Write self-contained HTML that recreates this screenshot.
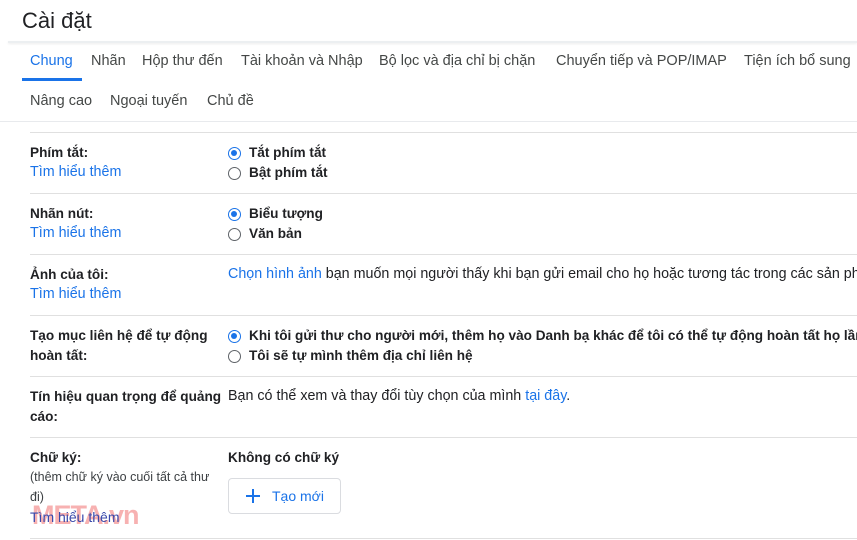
<!DOCTYPE html>
<html><head><meta charset="utf-8"><style>
*{margin:0;padding:0;box-sizing:border-box}
body{width:857px;height:540px;overflow:hidden;background:#fff;font-family:"Liberation Sans",Arial,sans-serif;color:#202124;position:relative;font-size:14.3px}
.a{position:absolute;white-space:nowrap}
.t{font-size:14.5px;color:#444746}
.b{font-weight:bold;color:#202124;font-size:13.6px}
.l{color:#1a73e8}
.hr{position:absolute;left:30px;right:0;height:1px;background:#e0e0e0}
.r{position:absolute;width:13px;height:13px;border:1.5px solid #5f6368;border-radius:50%}
.r.on{border-color:#1a73e8}
.r.on::after{content:"";position:absolute;left:2px;top:2px;width:6px;height:6px;border-radius:50%;background:#1a73e8}
</style></head><body>
<div class="a" style="left:22px;top:8px;font-size:22px;color:#202124">Cài đặt</div>
<div style="position:absolute;left:8px;right:0;top:41px;height:2px;background:#eceff1;box-shadow:0 1px 2px rgba(0,0,0,.08)"></div>
<div class="a t" style="left:30px;top:53px;color:#1a73e8">Chung</div>
<div style="position:absolute;left:22px;top:78px;width:60px;height:3px;background:#1a73e8"></div>
<div class="a t" style="left:91px;top:53px">Nhãn</div>
<div class="a t" style="left:142px;top:53px">Hộp thư đến</div>
<div class="a t" style="left:241px;top:53px">Tài khoản và Nhập</div>
<div class="a t" style="left:379px;top:53px">Bộ lọc và địa chỉ bị chặn</div>
<div class="a t" style="left:556px;top:53px">Chuyển tiếp và POP/IMAP</div>
<div class="a t" style="left:744px;top:53px">Tiện ích bổ sung</div>
<div class="a t" style="left:30px;top:93px">Nâng cao</div>
<div class="a t" style="left:110px;top:93px">Ngoại tuyến</div>
<div class="a t" style="left:207px;top:93px">Chủ đề</div>
<div style="position:absolute;left:0;right:0;top:121px;height:1px;background:#e8eaed"></div>
<div class="hr" style="top:132px"></div>

<div class="a b" style="left:30px;top:145px">Phím tắt:</div>
<div class="a l" style="left:30px;top:164px">Tìm hiểu thêm</div>
<div class="r on" style="left:228px;top:147px"></div><div class="a b" style="left:249px;top:145px">Tắt phím tắt</div>
<div class="r" style="left:228px;top:167px"></div><div class="a b" style="left:249px;top:165px">Bật phím tắt</div>
<div class="hr" style="top:193px"></div>

<div class="a b" style="left:30px;top:206px">Nhãn nút:</div>
<div class="a l" style="left:30px;top:225px">Tìm hiểu thêm</div>
<div class="r on" style="left:228px;top:208px"></div><div class="a b" style="left:249px;top:206px">Biểu tượng</div>
<div class="r" style="left:228px;top:228px"></div><div class="a b" style="left:249px;top:226px">Văn bản</div>
<div class="hr" style="top:254px"></div>

<div class="a b" style="left:30px;top:267px">Ảnh của tôi:</div>
<div class="a l" style="left:30px;top:286px">Tìm hiểu thêm</div>
<div class="a" style="left:228px;top:266px"><span class="l">Chọn hình ảnh</span> bạn muốn mọi người thấy khi bạn gửi email cho họ hoặc tương tác trong các sản ph</div>
<div class="hr" style="top:315px"></div>

<div class="a b" style="left:30px;top:328px">Tạo mục liên hệ để tự động</div>
<div class="a b" style="left:30px;top:348px">hoàn tất:</div>
<div class="r on" style="left:228px;top:330px"></div><div class="a b" style="left:249px;top:328px">Khi tôi gửi thư cho người mới, thêm họ vào Danh bạ khác để tôi có thể tự động hoàn tất họ lần</div>
<div class="r" style="left:228px;top:350px"></div><div class="a b" style="left:249px;top:348px">Tôi sẽ tự mình thêm địa chỉ liên hệ</div>
<div class="hr" style="top:376px"></div>

<div class="a b" style="left:30px;top:389px">Tín hiệu quan trọng để quảng</div>
<div class="a b" style="left:30px;top:409px">cáo:</div>
<div class="a" style="left:228px;top:388px">Bạn có thể xem và thay đổi tùy chọn của mình <span class="l">tại đây</span>.</div>
<div class="hr" style="top:437px"></div>

<div class="a b" style="left:30px;top:450px">Chữ ký:</div>
<div class="a" style="left:30px;top:470px;font-size:12.5px;color:#3c4043">(thêm chữ ký vào cuối tất cả thư</div>
<div class="a" style="left:30px;top:490px;font-size:12.5px;color:#3c4043">đi)</div>
<div class="a" style="left:32px;top:500px;font-size:27px;font-weight:bold;color:rgba(240,100,100,.5);letter-spacing:-1px">META.vn</div>
<div class="a" style="left:30px;top:509px;font-size:14px;color:#3949ab">Tìm hiểu thêm</div>
<div class="a b" style="left:228px;top:450px">Không có chữ ký</div>
<div style="position:absolute;left:228px;top:478px;width:113px;height:36px;border:1px solid #dadce0;border-radius:4px"></div>
<svg style="position:absolute;left:246px;top:489px" width="14" height="14"><path d="M7 0V14M0 7H14" stroke="#1a73e8" stroke-width="2"/></svg>
<div class="a" style="left:272px;top:488px;color:#1a73e8;font-size:14px">Tạo mới</div>
<div class="hr" style="top:538px"></div>
</body></html>
